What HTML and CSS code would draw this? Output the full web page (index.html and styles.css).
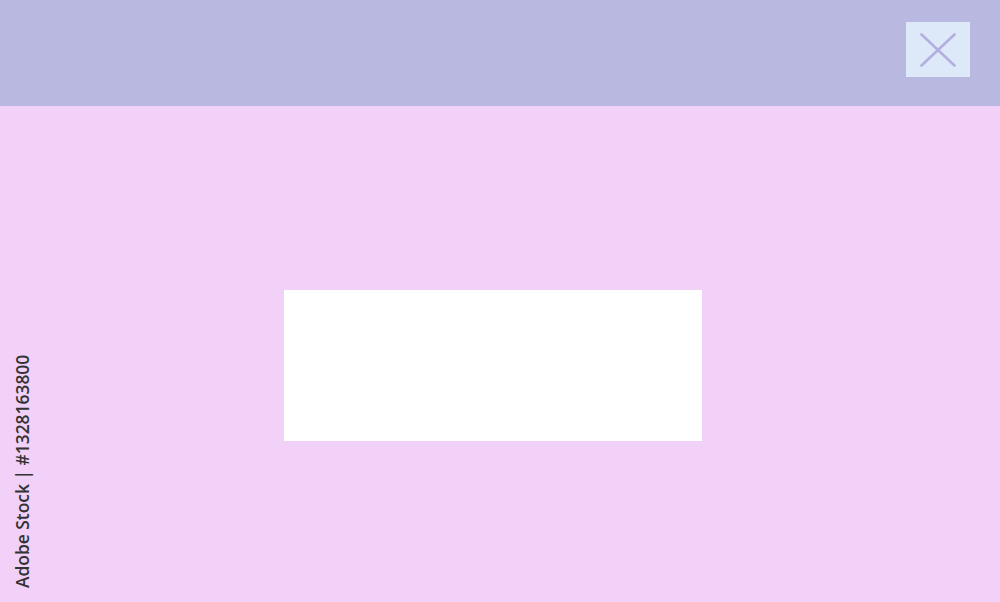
FILE: index.html
```html
<!DOCTYPE html>
<html>
<head>
<meta charset="utf-8">
<link rel="stylesheet" href="styles.css">
</head>
<body>
<div class="page">
  <header class="topbar">
    <button class="close" aria-label="Close">
      <svg width="36" height="34" viewBox="0 0 36 34"><path d="M1.5 1.5 L34.5 32.5 M34.5 1.5 L1.5 32.5" stroke="#b3afdf" stroke-width="2.6" stroke-linecap="round" fill="none"/></svg>
    </button>
  </header>
  <main class="body">
    <div class="box"></div>
  </main>
  <div class="credit">Adobe Stock | #1328163800</div>
</div>
</body>
</html>
```
FILE: styles.css
```css
html, body { margin: 0; padding: 0; }
body { width: 1000px; height: 602px; overflow: hidden; font-family: "Open Sans", "Noto Sans", sans-serif; }
.page { position: relative; width: 1000px; height: 602px; display: flex; flex-direction: column; }
.topbar { height: 106px; background: #b9b8e0; display: flex; justify-content: flex-end; align-items: flex-start; padding: 22px 30px 0 0; box-sizing: border-box; }
.close { width: 64px; height: 55px; background: #dde9f9; border: none; padding: 0; display: flex; align-items: center; justify-content: center; }
.body { flex: 1; background: #f2d1f9; padding: 184px 0 0 284px; box-sizing: border-box; }
.box { width: 418px; height: 151px; background: #ffffff; }
.credit { position: absolute; left: 11px; top: 588px; transform-origin: 0 0; transform: rotate(-90deg); white-space: nowrap; font-size: 17.4px; font-weight: 600; color: #333333; line-height: 23px; }
```
